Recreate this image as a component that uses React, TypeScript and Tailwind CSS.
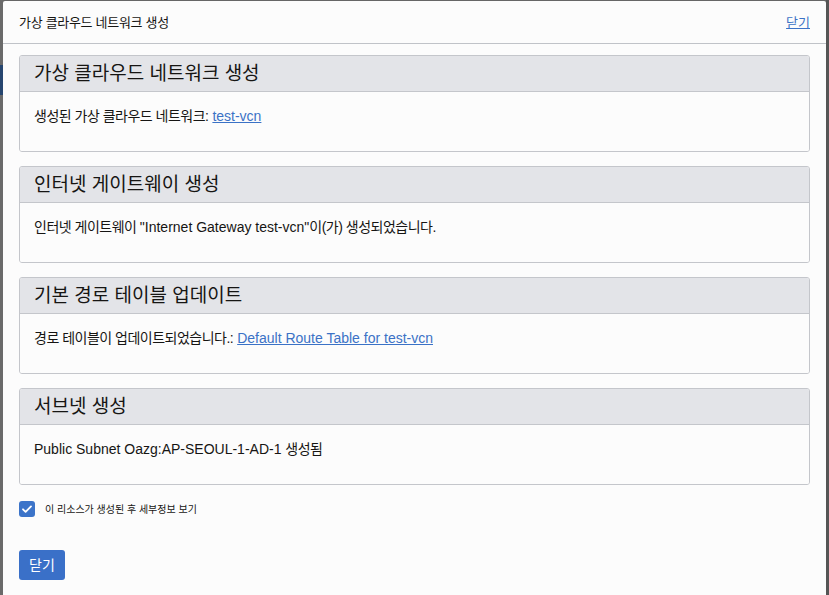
const font = { fontFamily: '"Liberation Sans", "Noto Sans CJK KR", sans-serif' };

function K({ children }: { children: React.ReactNode }) {
  return <span className="tracking-[-0.5px]">{children}</span>;
}

function Section({ title, children }: { title: string; children: React.ReactNode }) {
  return (
    <div className="border border-[#c4c6cb] rounded-[3px] overflow-hidden">
      <div className="h-[36px] bg-[#e3e4e8] border-b border-[#c4c6cb] flex items-center px-[14px]">
        <h3 className="text-[19px] leading-none text-[#161513]">{title}</h3>
      </div>
      <div className="h-[59px] bg-[#fcfcfc] px-[14px] pt-[15px] text-[14px] leading-[18px] text-[#161513]">
        {children}
      </div>
    </div>
  );
}

export default function App() {
  return (
    <div style={font} className="w-[829px] h-[595px] bg-[#666666] flex overflow-hidden">
      <div className="w-[3px] flex flex-col shrink-0">
        <div className="h-[65px] bg-[#6a6a6a]" />
        <div className="h-[30px] bg-[#27466f]" />
        <div className="flex-1 bg-[#6a6a6a]" />
      </div>
      <div className="w-[823px] mt-[1px] bg-[#fcfcfc] rounded-t-[2px] flex flex-col">
        <div className="h-[43px] border-b border-[#c0c3c8] flex items-center justify-between pl-[16px] pr-[16px] pt-[1px]">
          <span className="text-[13px] tracking-[-0.3px] text-[#161513]">가상 클라우드 네트워크 생성</span>
          <a href="#" className="text-[13px] text-[#3b72c6] underline">닫기</a>
        </div>
        <div className="flex flex-col gap-[14px] px-[16px] pt-[11px]">
          <Section title="가상 클라우드 네트워크 생성">
            <K>생성된 가상 클라우드 네트워크:</K>{" "}
            <a href="#" className="text-[#3b72c6] underline">test-vcn</a>
          </Section>
          <Section title="인터넷 게이트웨이 생성">
            <K>인터넷 게이트웨이 </K>"Internet Gateway test-vcn"<K>이(가) 생성되었습니다.</K>
          </Section>
          <Section title="기본 경로 테이블 업데이트">
            <K>경로 테이블이 업데이트되었습니다.:</K>{" "}
            <a href="#" className="text-[#3b72c6] underline">Default Route Table for test-vcn</a>
          </Section>
          <Section title="서브넷 생성">
            Public Subnet Oazg:AP-SEOUL-1-AD-1 <K>생성됨</K>
          </Section>
        </div>
        <label className="flex items-center gap-[10px] px-[16px] mt-[16px]">
          <span className="w-[16px] h-[16px] rounded-[3px] bg-[#3c74c9] flex items-center justify-center">
            <svg width="12" height="12" viewBox="0 0 12 12" fill="none" stroke="white" strokeWidth="1.8" strokeLinecap="round" strokeLinejoin="round">
              <path d="M2 6.3l2.6 2.6L10 3.4" />
            </svg>
          </span>
          <span className="text-[10px] text-[#161513]">이 리소스가 생성된 후 세부정보 보기</span>
        </label>
        <div className="px-[16px] mt-[33px]">
          <button className="w-[46px] h-[30px] rounded-[3px] bg-[#3a70c8] text-white text-[14px]">닫기</button>
        </div>
      </div>
      <div className="w-[3px] flex flex-col shrink-0 bg-[#555555]" />
    </div>
  );
}
